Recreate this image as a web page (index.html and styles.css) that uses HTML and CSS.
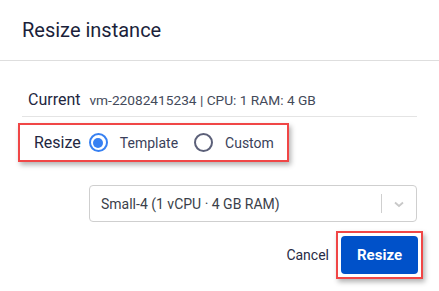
FILE: index.html
```html
<!DOCTYPE html>
<html lang="en">
  <head>
    <meta charset="UTF-8" />
    <meta name="viewport" content="width=device-width, initial-scale=1.0" />
    <title>Resize instance</title>
    <link rel="stylesheet" href="styles.css">
  </head>

  <body>
    <div class="Dialog">
      <div class="Header">
        <h2>Resize instance</h2>
      </div>

      <div class="Content">
        <div class="current">
          <span class="label">Current</span>
          <span class="value">vm-22082415234 | CPU: 1 RAM: 4 GB</span>
        </div>

        <div class="highlight resizeRow">
          <span class="label">Resize</span>
          <label class="radio">
            <span class="circle checked"></span>
            Template
          </label>
          <label class="radio">
            <span class="circle"></span>
            Custom
          </label>
        </div>

        <div class="selectRow">
          <div class="select">
            <span class="selected">Small-4 (1 vCPU · 4 GB RAM)</span>
            <span class="divider"></span>
            <svg class="chevron" width="14" height="14" viewBox="0 0 14 14">
              <path d="M3 5.5 L7 9 L11 5.5" fill="none" stroke="#c8c8c8" stroke-width="1.8" />
            </svg>
          </div>
        </div>

        <div class="footer">
          <button class="cancel">Cancel</button>
          <div class="highlight btnWrap">
            <button class="primary">Resize</button>
          </div>
        </div>
      </div>
    </div>
  </body>
</html>
```

FILE: styles.css
```css
body {
  margin: 0;
  background: #ffffff;
  font-family: Roboto, "Noto Sans", sans-serif;
  color: #272b45;
}

.Dialog {
  width: 439px;
  height: 291px;
}

.Header {
  height: 60px;
  display: flex;
  align-items: center;
  padding: 0 22px;
  border-bottom: 1px solid #dedede;
}

.Header h2 {
  margin: 0;
  font-size: 20px;
  font-weight: 400;
  color: #1b1f3b;
}

.Content {
  padding: 0 22px;
}

.current {
  display: flex;
  align-items: baseline;
  gap: 9px;
  height: 56px;
  box-sizing: border-box;
  padding: 31px 0 0 6px;
  border-bottom: 1px solid #e4e4e4;
  line-height: 1;
}

.current .label {
  font-size: 16px;
  color: #23273f;
}

.current .value {
  font-size: 13.7px;
  color: #444a5a;
}

.highlight {
  border: 2px solid #f04646;
  box-shadow: 2px 3px 5px rgba(0, 0, 0, 0.3);
}

.resizeRow {
  display: flex;
  align-items: center;
  width: 271px;
  height: 39px;
  box-sizing: border-box;
  margin: 6px 0 0 -4px;
  padding-left: 14px;
}

.resizeRow .label {
  font-size: 16px;
  color: #23273f;
  margin-right: 8px;
}

.radio {
  display: flex;
  align-items: center;
  font-size: 14px;
  color: #3a3f5a;
  margin-right: 16px;
}

.circle {
  width: 19px;
  height: 19px;
  box-sizing: border-box;
  border-radius: 50%;
  border: 2px solid #5c6079;
  margin-right: 12px;
  display: flex;
  align-items: center;
  justify-content: center;
}

.circle.checked {
  border-color: #3780f2;
}

.circle.checked::after {
  content: "";
  width: 10px;
  height: 10px;
  border-radius: 50%;
  background: #3780f2;
}

.selectRow {
  display: flex;
  justify-content: flex-end;
  margin-top: 23px;
}

.select {
  width: 328px;
  height: 37px;
  box-sizing: border-box;
  border: 1px solid #cfcfcf;
  border-radius: 4px;
  display: flex;
  align-items: center;
  padding-left: 11px;
}

.selected {
  flex: 1;
  font-size: 14px;
  color: #3b3f4a;
}

.divider {
  width: 1px;
  height: 19px;
  background: #cfcfcf;
}

.chevron {
  margin: 0 10px;
}

.footer {
  display: flex;
  justify-content: flex-end;
  align-items: center;
  margin-top: 9px;
  margin-right: -6px;
}

.cancel {
  border: none;
  background: none;
  font-family: inherit;
  font-size: 14px;
  color: #272b45;
  padding: 0;
  margin-right: 7px;
  cursor: pointer;
}

.btnWrap {
  padding: 3px;
  display: flex;
}

.primary {
  width: 77px;
  height: 38px;
  border: none;
  border-radius: 4px;
  background: #0051c9;
  color: #ffffff;
  font-family: inherit;
  font-size: 15px;
  font-weight: 700;
  cursor: pointer;
}
```
